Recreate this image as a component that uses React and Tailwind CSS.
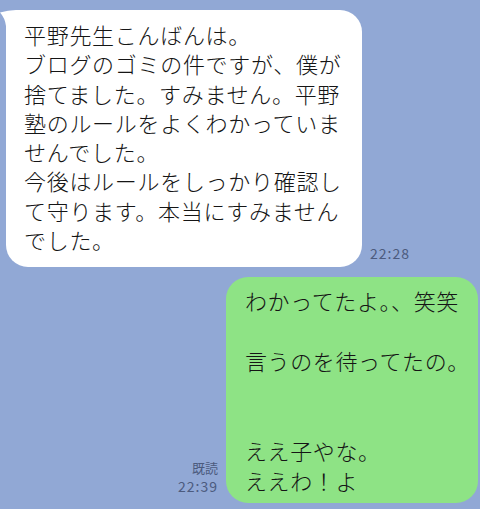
export default function App() {
  const font = { fontFamily: '"Noto Sans CJK JP", "Noto Sans", sans-serif' };
  const left = [
    "平野先生こんばんは。",
    "ブログのゴミの件ですが、僕が",
    "捨てました。すみません。平野",
    "塾のルールをよくわかっていま",
    "せんでした。",
    "今後はルールをしっかり確認し",
    "て守ります。本当にすみません",
    "でした。",
  ];
  const right = [
    "わかってたよ。、笑笑",
    "",
    "言うのを待ってたの。",
    "",
    "",
    "ええ子やな。",
    "ええわ！よ",
  ];
  return (
    <div
      className="w-[480px] h-[509px] overflow-hidden bg-[#91a8d5] flex flex-col"
      style={font}
    >
      <div className="flex items-end mt-[10px] ml-[6px]">
        <div className="relative w-[356px] h-[257px] bg-white rounded-[22px] pl-[18px] pt-[10px] text-[22px] leading-[29.3px] tracking-[0.7px] font-light text-[#151515]">
          <svg
            className="absolute left-[-6px] top-0"
            width="30"
            height="30"
            viewBox="0 0 30 30"
          >
            <path d="M0 2.5 Q 8 0 16 0 L 30 0 L 30 30 L 6 30 L 6 16 Q 5 8 0 2.5 Z" fill="#fff" />
          </svg>
          <div className="relative">
            {left.map((l, i) => (
              <div key={i} className="whitespace-nowrap h-[29.3px]">{l}</div>
            ))}
          </div>
        </div>
        <div className="ml-[8px] mb-[6px] text-[14px] leading-[16px] tracking-[1px] text-[#4c5b7e]">22:28</div>
      </div>
      <div className="flex items-end justify-end mt-[10px] mr-[2px]">
        <div className="mr-[8px] mb-[8px] text-right text-[13px] leading-[18px] text-[#4c5b7e]">
          <div>既読</div>
          <div className="text-[14px] tracking-[1px]">22:39</div>
        </div>
        <div className="w-[252px] h-[226px] bg-[#8ee385] rounded-[22px] pl-[19px] pt-[8px] text-[22px] leading-[30px] tracking-[0.6px] font-light text-[#151515]">
          {right.map((l, i) => (
            <div key={i} className="whitespace-nowrap h-[30px]">{l}</div>
          ))}
        </div>
      </div>
    </div>
  );
}
